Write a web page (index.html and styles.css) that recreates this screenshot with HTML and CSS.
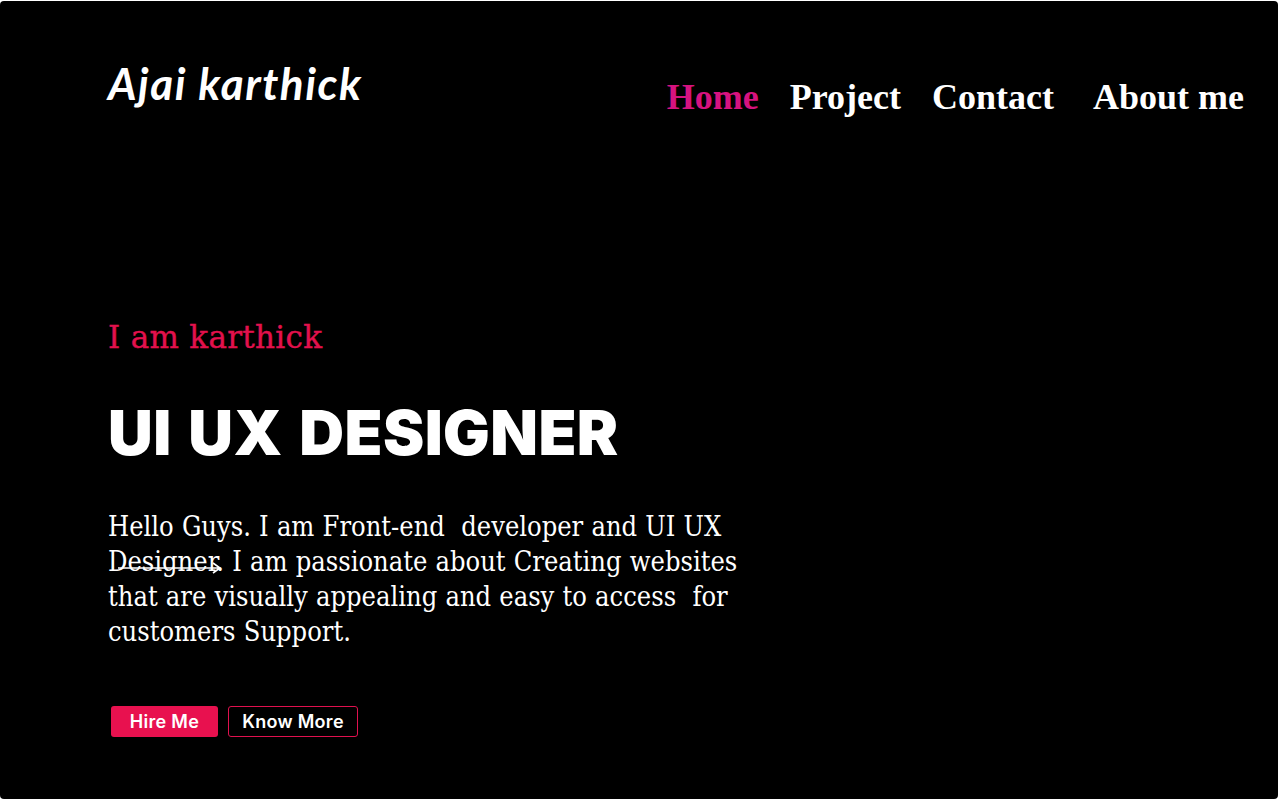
FILE: index.html
```html
<!DOCTYPE html>
<html lang="en">
<head>
<meta charset="utf-8">
<title>Ajai karthick</title>
<link rel="stylesheet" href="styles.css">
</head>
<body>
<div class="page">
  <header class="header">
    <div class="logo">Ajai karthick</div>
    <nav class="nav">
      <a class="nav-link active" href="#">Home</a>
      <a class="nav-link" href="#">Project</a>
      <a class="nav-link" href="#">Contact</a>
      <a class="nav-link last" href="#">About me</a>
    </nav>
  </header>
  <section class="hero">
    <p class="intro">I am karthick</p>
    <h1 class="title">UI UX DESIGNER</h1>
    <div class="desc-wrap">
      <p class="desc">Hello Guys. I am Front-end&nbsp; developer and UI UX Designer. I am passionate about Creating websites that are visually appealing and easy to access&nbsp; for customers Support.</p>
      <svg class="arrow" width="108" height="12" viewBox="0 0 108 12"><path d="M2 6 H104 M97 1 L104 6 L97 11" fill="none" stroke="#fff" stroke-width="1.6"/></svg>
    </div>
    <div class="actions">
      <a class="btn btn-primary" href="#">Hire Me</a>
      <a class="btn btn-outline" href="#">Know More</a>
    </div>
  </section>
</div>
</body>
</html>
```
FILE: styles.css
```css
html, body {
  margin: 0;
  padding: 0;
  background: #fff;
}
.page {
  box-sizing: border-box;
  width: 1278px;
  height: 798px;
  margin-top: 1px;
  background: #000;
  border-radius: 4px;
  padding: 0 0 0 108px;
  color: #fff;
}
.header {
  display: flex;
  justify-content: space-between;
  align-items: flex-start;
  padding-top: 54px;
}
.logo {
  font-family: "Lato", sans-serif;
  font-style: italic;
  font-weight: 700;
  font-size: 44px;
  line-height: 56px;
  letter-spacing: 1.5px;
}
.nav {
  display: flex;
  gap: 31px;
  padding-top: 18px;
  padding-right: 34px;
}
.nav-link {
  font-family: "Liberation Serif", serif;
  font-weight: 700;
  font-size: 36px;
  line-height: 48px;
  color: #fff;
  text-decoration: none;
}
.nav-link.active { color: #d6137f; }
.nav-link.last { margin-left: 8px; }
.hero {
  padding-top: 196px;
}
.intro {
  margin: 0;
  font-family: "DejaVu Serif", serif;
  font-size: 31px;
  line-height: 40px;
  color: #e3114d;
  letter-spacing: 0.3px;
  -webkit-text-stroke: 0.4px #e3114d;
}
.title {
  margin: 40px 0 0;
  font-family: "Inter", sans-serif;
  font-weight: 900;
  font-size: 62px;
  line-height: 72px;
  letter-spacing: 0.4px;
  word-spacing: 4px;
}
.desc-wrap {
  position: relative;
  width: 650px;
  margin-top: 40px;
}
.desc {
  margin: 0;
  font-family: "DejaVu Serif", serif;
  font-stretch: condensed;
  font-size: 27px;
  line-height: 35px;
  word-spacing: 0.5px;
}
.arrow {
  position: absolute;
  left: 8px;
  top: 53px;
}
.actions {
  display: flex;
  gap: 10px;
  margin-top: 57px;
  padding-left: 3px;
}
.btn {
  box-sizing: border-box;
  height: 31px;
  display: inline-flex;
  align-items: center;
  justify-content: center;
  font-family: "Inter", sans-serif;
  font-weight: 600;
  font-size: 18px;
  letter-spacing: 0.3px;
  color: #fff;
  text-decoration: none;
  border-radius: 3px;
}
.btn-primary {
  width: 107px;
  background: #e8114f;
}
.btn-outline {
  width: 130px;
  border: 1px solid #e0114f;
}
```
